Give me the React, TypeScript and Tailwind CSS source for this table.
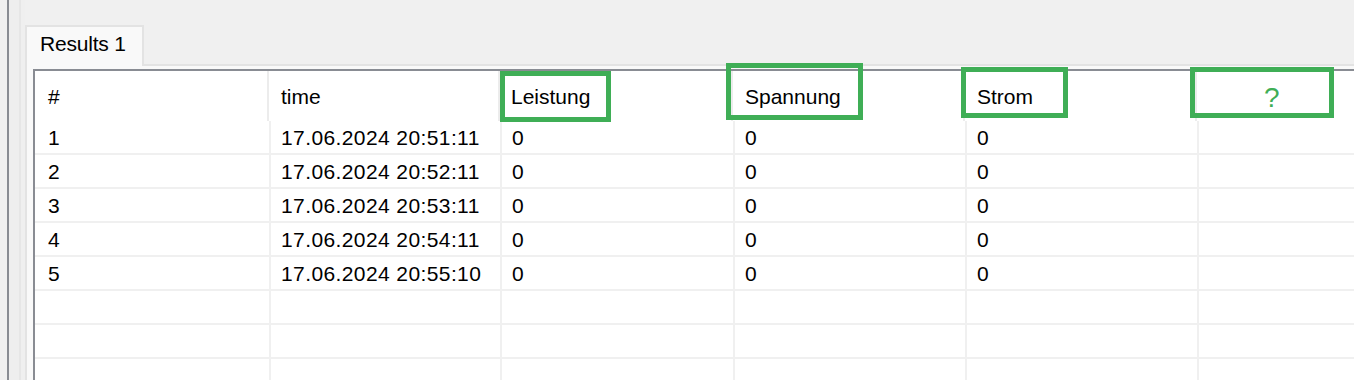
import React from "react";

const headerCols = [
  { w: "w-[234px]", pl: "pl-[13px]", label: "#" },
  { w: "w-[231px]", pl: "pl-[12px]", label: "time" },
  { w: "w-[233px]", pl: "pl-[11px]", label: "Leistung" },
  { w: "w-[232px]", pl: "pl-[12px]", label: "Spannung" },
  { w: "w-[232px]", pl: "pl-[12px]", label: "Strom" },
];

const bodyCols = [
  { w: "w-[236px]", pl: "pl-[13px]", extra: "" },
  { w: "w-[231px]", pl: "pl-[10px]", extra: "tracking-[0.4px]" },
  { w: "w-[233px]", pl: "pl-[10px]", extra: "" },
  { w: "w-[232px]", pl: "pl-[10px]", extra: "" },
  { w: "w-[232px]", pl: "pl-[10px]", extra: "" },
];

const rows: string[][] = [
  ["1", "17.06.2024 20:51:11", "0", "0", "0"],
  ["2", "17.06.2024 20:52:11", "0", "0", "0"],
  ["3", "17.06.2024 20:53:11", "0", "0", "0"],
  ["4", "17.06.2024 20:54:11", "0", "0", "0"],
  ["5", "17.06.2024 20:55:10", "0", "0", "0"],
  ["", "", "", "", ""],
  ["", "", "", "", ""],
  ["", "", "", "", ""],
];

export default function App() {
  return (
    <div className="relative w-[1354px] h-[380px] overflow-hidden bg-[#f0f0f0] flex font-['Liberation_Sans',Arial,sans-serif] text-black">
      <div className="w-[7px] shrink-0" />
      <div className="w-[2px] shrink-0 bg-[#898c93]" />
      <div className="w-[10px] shrink-0 bg-[#eeeeee]" />
      <div className="w-[2px] shrink-0 bg-[#e6e6e6]" />
      <div className="w-[4px] shrink-0 bg-[#efefef]" />
      <div className="flex-1 flex flex-col min-w-0">
        <div className="h-[25px] shrink-0" />
        <div className="flex h-[41px] shrink-0">
          <div className="w-[119px] shrink-0 border-x-2 border-t-2 border-[#e3e3e3] bg-[#f9f9f9] pl-[13px] pt-[6px] text-[21px] leading-[21px] tracking-[-0.2px] whitespace-nowrap">
            Results 1
          </div>
          <div className="flex-1 border-b-2 border-[#e3e3e3]" />
        </div>
        <div className="flex-1 min-h-0 border-l-2 border-[#e3e3e3] bg-[#f9f9f9] pl-[6px] pt-[3px] flex flex-col">
          <div className="flex-1 border-l-2 border-t-2 border-[#898c93] bg-white flex flex-col text-[21px] leading-[21px]">
            <div className="flex h-[50px] shrink-0">
              {headerCols.map((c, i) => (
                <div
                  key={i}
                  className={`${c.w} ${c.pl} shrink-0 flex items-center border-r-2 border-[#ececec] whitespace-nowrap`}
                >
                  {c.label}
                </div>
              ))}
              <div className="flex-1" />
            </div>
            {rows.map((r, ri) => (
              <div key={ri} className="flex h-[34px] shrink-0 border-b-2 border-[#f0f0f0]">
                {bodyCols.map((c, ci) => (
                  <div
                    key={ci}
                    className={`${c.w} ${c.pl} ${c.extra} shrink-0 flex items-center border-r-2 border-[#f0f0f0] whitespace-nowrap`}
                  >
                    {r[ci]}
                  </div>
                ))}
                <div className="flex-1" />
              </div>
            ))}
          </div>
        </div>
      </div>

      {/* annotation boxes */}
      <div className="absolute left-[500px] top-[71px] w-[111px] h-[51px] border-[5px] border-[#3fae56]" />
      <div className="absolute left-[726px] top-[63px] w-[137px] h-[57px] border-[5px] border-[#3fae56]" />
      <div className="absolute left-[961px] top-[67px] w-[107px] h-[51px] border-[5px] border-[#3fae56]" />
      <div className="absolute left-[1190px] top-[67px] w-[144px] h-[51px] border-[5px] border-[#3fae56]" />
      <span className="absolute left-[1264px] top-[83px] text-[28px] leading-[29px] text-[#3fae56]">?</span>
    </div>
  );
}
